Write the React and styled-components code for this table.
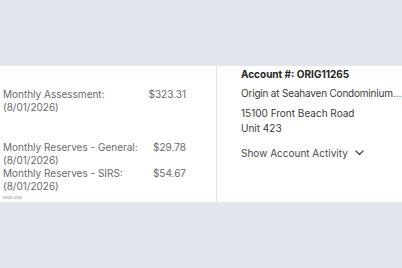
import React from 'react';
import styled, { createGlobalStyle } from 'styled-components';

const Global = createGlobalStyle`
  html, body {
    margin: 0;
    background: #e2e6ed;
  }
  body {
    font-family: 'Inter', 'Liberation Sans', sans-serif;
  }
`;

const Page = styled.div`
  padding-top: 66px;
  height: 268px;
  box-sizing: border-box;
`;

const Panel = styled.section`
  display: grid;
  grid-template-columns: 217px 1fr;
  height: 136px;
  background: #ffffff;
`;

const Charges = styled.div`
  display: flex;
  flex-direction: column;
  padding: 22px 30px 0 3px;
  border-right: 1px solid #e3e3e3;
`;

const Charge = styled.div`
  display: flex;
  justify-content: space-between;
  margin-top: ${(p) => (p.$gap ? '27px' : '0')};
  font-size: 10px;
  line-height: 13px;
  color: #6a6a6a;
`;

const Label = styled.div`
  display: flex;
  flex-direction: column;
`;

const Amount = styled.span`
  color: #6a6a6a;
`;

const Fine = styled.div`
  font-size: 4px;
  line-height: 9px;
  color: #888;
`;

const Account = styled.div`
  display: flex;
  flex-direction: column;
  padding: 1px 0 0 24px;
  font-size: 10px;
  color: #3b3b3b;
  min-width: 0;
`;

const Title = styled.div`
  font-weight: 700;
  color: #262626;
  line-height: 14px;
`;

const Line = styled.div`
  line-height: 15px;
  margin-top: ${(p) => p.$top || 0}px;
  letter-spacing: ${(p) => (p.$tight ? '-0.2px' : 'normal')};
  white-space: nowrap;
`;

const Toggle = styled.button`
  display: flex;
  align-items: center;
  gap: 7px;
  margin-top: 11px;
  padding: 0;
  border: 0;
  background: none;
  font: inherit;
  font-size: 10px;
  color: #4a4a4a;
  cursor: pointer;
`;

export default function App() {
  return (
    <>
      <Global />
      <Page>
        <Panel>
          <Charges>
            <Charge>
              <Label>
                <span>Monthly Assessment:</span>
                <span>(8/01/2026)</span>
              </Label>
              <Amount>$323.31</Amount>
            </Charge>
            <Charge $gap>
              <Label>
                <span>Monthly Reserves - General:</span>
                <span>(8/01/2026)</span>
              </Label>
              <Amount>$29.78</Amount>
            </Charge>
            <Charge>
              <Label>
                <span>Monthly Reserves - SIRS:</span>
                <span>(8/01/2026)</span>
              </Label>
              <Amount>$54.67</Amount>
            </Charge>
            <Fine>esox cnas</Fine>
          </Charges>
          <Account>
            <Title>Account #: ORIG11265</Title>
            <Line $top={5} $tight>Origin at Seahaven Condominium…</Line>
            <Line $top={5}>15100 Front Beach Road</Line>
            <Line>Unit 423</Line>
            <Toggle>
              Show Account Activity
              <svg width="9" height="6" viewBox="0 0 9 6" fill="none">
                <path d="M1 1l3.5 3.5L8 1" stroke="#4a4a4a" strokeWidth="1.3" strokeLinecap="round" strokeLinejoin="round" />
              </svg>
            </Toggle>
          </Account>
        </Panel>
      </Page>
    </>
  );
}
